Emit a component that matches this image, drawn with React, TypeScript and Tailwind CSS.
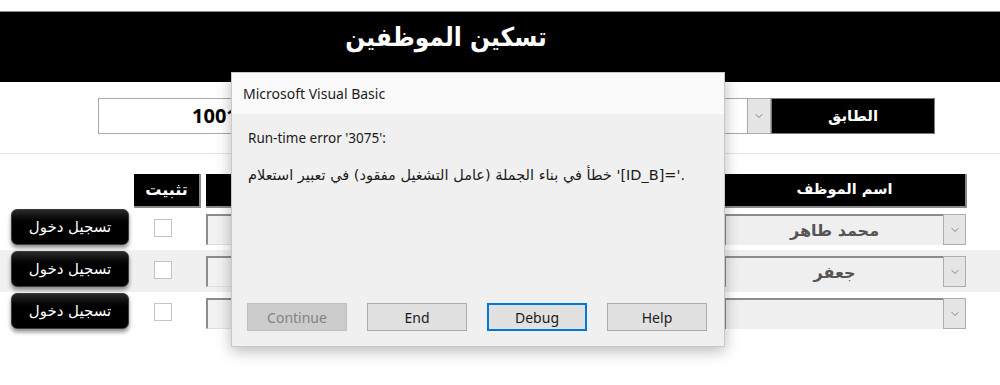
import { ChevronDown } from "lucide-react";

const arabic = { fontFamily: '"DejaVu Sans", "Noto Sans", sans-serif' };
const arabicNarrow = {
  fontFamily: '"DejaVu Sans Condensed", "DejaVu Sans", sans-serif',
};
const ui = { fontFamily: '"Noto Sans", "DejaVu Sans", sans-serif' };

type Row = { name: string };

const rows: Row[] = [{ name: "محمد طاهر" }, { name: "جعفر" }, { name: "" }];

function DropButton({ className = "" }: { className?: string }) {
  return (
    <div
      className={`flex items-center justify-center bg-[#e5e5e5] border border-[#adadad] ${className}`}
    >
      <ChevronDown className="w-[12px] h-[12px] text-[#606060]" strokeWidth={1.5} />
    </div>
  );
}

function LoginButton() {
  return (
    <button
      className="w-[118px] h-[36px] rounded-[6px] bg-gradient-to-b from-[#2a2a2a] via-black to-black text-white text-[15px] border border-[#3a3a3a] shadow-[0_3px_4px_rgba(0,0,0,0.45)]"
      style={arabic}
    >
      تسجيل دخول
    </button>
  );
}

function Dialog() {
  const btn =
    "w-[100px] h-[28px] text-[14px] border flex items-center justify-center";
  return (
    <div
      className="absolute left-[231px] top-[72px] w-[494px] h-[275px] flex flex-col bg-[#f0f0f0] border border-[#c8c8c8] shadow-[0_4px_14px_rgba(0,0,0,0.28)]"
      style={ui}
    >
      <div className="h-[41px] bg-[#fafafa] flex items-center pl-[11px] text-[14px] text-[#1b1b1b]">
        Microsoft Visual Basic
      </div>
      <div className="pl-[16px] pt-[14px] text-[13.5px] text-[#1b1b1b]">
        Run-time error '3075':
      </div>
      <div
        dir="ltr"
        className="pl-[16px] pt-[17px] text-[14.5px] text-[#1b1b1b]"
        style={arabic}
      >
        خطأ في بناء الجملة (عامل التشغيل مفقود) في تعبير استعلام '[ID_B]='.
      </div>
      <div className="mt-auto mb-[15px] pl-[15px] flex gap-[20px]">
        <div className={`${btn} bg-[#cccccc] border-[#bfbfbf] text-[#838383]`}>
          Continue
        </div>
        <div className={`${btn} bg-[#e1e1e1] border-[#adadad] text-[#1b1b1b]`}>
          End
        </div>
        <div className={`${btn} bg-[#e1e1e1] border-2 border-[#0078d7] text-[#1b1b1b]`}>
          Debug
        </div>
        <div className={`${btn} bg-[#e1e1e1] border-[#adadad] text-[#1b1b1b]`}>
          Help
        </div>
      </div>
    </div>
  );
}

export default function App() {
  return (
    <div className="relative w-[1000px] h-[385px] bg-white overflow-hidden">
      <div className="pt-[11px]">
        <div
          className="h-[71px] bg-black border-t border-[#8a8a8a] flex justify-center pr-[108px] pt-[6px] text-white text-[26px] font-bold"
          style={arabicNarrow}
        >
          تسكين الموظفين
        </div>
      </div>

      <div className="h-[72px] border-b border-[#e4e4e4] pt-[16px] pl-[98px] flex">
        <div
          className="w-[650px] h-[36px] border border-[#a9a9a9] bg-white flex items-center pl-[93px] text-[20px] font-bold text-black"
          style={ui}
        >
          1001
        </div>
        <DropButton className="w-[23px] h-[36px] border-l-0" />
        <div
          className="w-[164px] h-[36px] bg-black border border-[#7a7a7a] text-white font-bold text-[15px] flex items-center justify-center"
          style={arabic}
        >
          الطابق
        </div>
      </div>

      <div className="pt-[20px]">
        <div className="flex h-[34px] text-white font-bold" style={arabic}>
          <div className="w-[134px]" />
          <div className="w-[67px] bg-black border-r-2 border-b-2 border-[#8a8a8a] flex items-center justify-center text-[16px]">
            تثبيت
          </div>
          <div className="w-[5px]" />
          <div className="w-[513px] bg-black border-r-2 border-b-2 border-[#8a8a8a]" />
          <div className="w-[5px]" />
          <div className="w-[243px] bg-black border-r-2 border-b-2 border-[#8a8a8a] flex items-center justify-center text-[14.5px]">
            اسم الموظف
          </div>
        </div>

        {rows.map((r, i) => (
          <div
            key={i}
            className={`flex items-start h-[42px] ${i === 1 ? "bg-[#f0f0f0]" : ""}`}
          >
            <div className="w-[11px]" />
            <div className="mt-[1px]">
              <LoginButton />
            </div>
            <div className="w-[25px]" />
            <div className="mt-[11px] w-[18px] h-[18px] bg-white border border-[#c4c4c4]" />
            <div className="w-[34px]" />
            <div className="mt-[6px] w-[513px] h-[31px] bg-[#f2f2f2] border-t-2 border-l-2 border-[#8c8c8c] border-r border-b border-r-[#e0e0e0] border-b-[#e0e0e0]" />
            <div className="w-[5px]" />
            <div className="mt-[6px] flex h-[31px]">
              <div
                className="w-[219px] bg-[#efefef] border-t-2 border-l-2 border-[#8c8c8c] flex items-center justify-center text-[16px] font-bold text-[#555555]"
                style={arabic}
              >
                {r.name}
              </div>
              <DropButton className="w-[23px] h-[31px]" />
            </div>
          </div>
        ))}
      </div>

      <Dialog />
    </div>
  );
}
